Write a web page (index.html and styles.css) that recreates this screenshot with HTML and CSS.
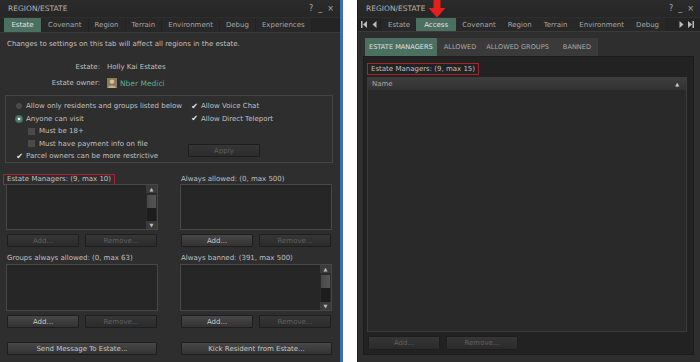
FILE: index.html
```html
<!DOCTYPE html>
<html lang="en">
<head>
    <meta charset="UTF-8">
    <title>Region/Estate</title>
    <link rel="stylesheet" href="styles.css">
</head>
<body>
<div class="screen">

    <!-- left floater: Estate tab -->
    <div class="window win-left">
        <div class="titlebar">
            <span class="title">REGION/ESTATE</span>
            <span class="controls"><span>?</span><span>_</span><span>×</span></span>
        </div>
        <div class="tabs tabs-left">
            <span class="tab active tab-wide">Estate</span>
            <span class="tab">Covenant</span>
            <span class="tab">Region</span>
            <span class="tab">Terrain</span>
            <span class="tab">Environment</span>
            <span class="tab">Debug</span>
            <span class="tab">Experiences</span>
        </div>

        <div class="estate-body">
            <p class="note">Changes to settings on this tab will affect all regions in the estate.</p>

            <div class="info-row">
                <span class="info-label">Estate:</span>
                <span>Holly Kai Estates</span>
            </div>
            <div class="info-row">
                <span class="info-label">Estate owner:</span>
                <svg class="avatar" width="10" height="10" viewBox="0 0 10 10">
                    <rect width="10" height="10" fill="#8c7a58"/>
                    <circle cx="5" cy="3.6" r="2.2" fill="#d9c39a"/>
                    <path d="M1 10 C1.5 6.5 8.5 6.5 9 10 Z" fill="#c9b083"/>
                </svg>
                <span class="owner">Nber Medici</span>
            </div>

            <div class="options">
                <div class="opt-col opt-main">
                    <div class="opt"><span class="radio"></span>Allow only residents and groups listed below</div>
                    <div class="opt"><span class="radio on"></span>Anyone can visit</div>
                    <div class="opt sub"><span class="check"></span>Must be 18+</div>
                    <div class="opt sub"><span class="check"></span>Must have payment info on file</div>
                    <div class="opt"><span class="check on">✔</span>Parcel owners can be more restrictive</div>
                </div>
                <div class="opt-col">
                    <div class="opt"><span class="check on">✔</span>Allow Voice Chat</div>
                    <div class="opt"><span class="check on">✔</span>Allow Direct Teleport</div>
                    <button class="btn off apply">Apply</button>
                </div>
            </div>

            <div class="lists">
                <div class="list-col">
                    <div class="list-label"><span class="marked">Estate Managers: (9, max 10)</span></div>
                    <div class="listbox">
                        <div class="scrollbar">
                            <span class="sb-arrow">▲</span>
                            <span class="sb-thumb"></span>
                            <span class="sb-track"></span>
                            <span class="sb-arrow">▼</span>
                        </div>
                    </div>
                    <div class="btn-row">
                        <button class="btn off">Add...</button>
                        <button class="btn off">Remove...</button>
                    </div>
                </div>
                <div class="list-col">
                    <div class="list-label">Always allowed: (0, max 500)</div>
                    <div class="listbox"></div>
                    <div class="btn-row">
                        <button class="btn">Add...</button>
                        <button class="btn off">Remove...</button>
                    </div>
                </div>
                <div class="list-col">
                    <div class="list-label">Groups always allowed: (0, max 63)</div>
                    <div class="listbox tall"></div>
                    <div class="btn-row">
                        <button class="btn">Add...</button>
                        <button class="btn off">Remove...</button>
                    </div>
                    <button class="btn wide">Send Message To Estate...</button>
                </div>
                <div class="list-col">
                    <div class="list-label">Always banned: (391, max 500)</div>
                    <div class="listbox tall">
                        <div class="scrollbar">
                            <span class="sb-arrow">▲</span>
                            <span class="sb-thumb"></span>
                            <span class="sb-track"></span>
                            <span class="sb-arrow">▼</span>
                        </div>
                    </div>
                    <div class="btn-row">
                        <button class="btn">Add...</button>
                        <button class="btn off">Remove...</button>
                    </div>
                    <button class="btn wide">Kick Resident from Estate...</button>
                </div>
            </div>
        </div>
    </div>

    <!-- right floater: Access tab -->
    <div class="window win-right">
        <div class="titlebar">
            <span class="title">REGION/ESTATE</span>
            <svg class="red-arrow" width="18" height="18" viewBox="0 0 18 18">
                <path d="M5.5 0 H12.5 V8 H17.5 L9 17.5 L0.5 8 H5.5 Z" fill="#e3201b"/>
            </svg>
            <span class="controls"><span>?</span><span>_</span><span>×</span></span>
        </div>
        <div class="tabs tabs-right">
            <span class="tab-scroll">
                <svg width="6" height="7" viewBox="0 0 6 7"><rect width="1.5" height="7" fill="#bbb"/><path d="M6 0 V7 L2 3.5 Z" fill="#bbb"/></svg>
                <svg width="5" height="7" viewBox="0 0 5 7"><path d="M4.5 0 V7 L0.5 3.5 Z" fill="#bbb"/></svg>
            </span>
            <span class="tab">Estate</span>
            <span class="tab active">Access</span>
            <span class="tab">Covenant</span>
            <span class="tab">Region</span>
            <span class="tab">Terrain</span>
            <span class="tab">Environment</span>
            <span class="tab">Debug</span>
            <span class="tab-scroll right">
                <svg width="5" height="7" viewBox="0 0 5 7"><path d="M0.5 0 V7 L4.5 3.5 Z" fill="#bbb"/></svg>
                <svg width="6" height="7" viewBox="0 0 6 7"><path d="M0 0 V7 L4 3.5 Z" fill="#bbb"/><rect x="4.5" width="1.5" height="7" fill="#bbb"/></svg>
            </span>
        </div>

        <div class="access-body">
            <div class="subtabs">
                <span class="subtab active">ESTATE MANAGERS</span>
                <span class="subtab">ALLOWED</span>
                <span class="subtab">ALLOWED GROUPS</span>
                <span class="subtab">BANNED</span>
            </div>
            <div class="access-panel">
                <div class="list-label"><span class="marked">Estate Managers: (9, max 15)</span></div>
                <div class="name-list">
                    <div class="name-head">
                        <span>Name</span>
                        <span class="sort">▲</span>
                    </div>
                </div>
                <div class="btn-row">
                    <button class="btn off">Add...</button>
                    <button class="btn off">Remove...</button>
                </div>
            </div>
        </div>
    </div>

</div>
</body>
</html>
```

FILE: styles.css
```css
* {
    box-sizing: border-box;
}

body {
    margin: 0;
    background: #ffffff;
    font-family: "DejaVu Sans", sans-serif;
    font-size: 7px;
    color: #c0c0c0;
}

.screen {
    display: flex;
    width: 700px;
    height: 362px;
    overflow: hidden;
}

.window {
    display: flex;
    flex-direction: column;
    height: 362px;
    background: #2e2e2e;
}

.win-left {
    width: 343px;
    border-right: 3px solid #3c6db5;
}

.win-right {
    width: 343px;
    margin-left: 14px;
    border-left: 1px solid #1a1a1a;
}

/* title bar */

.titlebar {
    position: relative;
    display: flex;
    align-items: center;
    justify-content: space-between;
    height: 17px;
    padding: 0 6px 0 8px;
    background: linear-gradient(#2b2b2b, #262626);
}

.title {
    font-size: 7.5px;
    color: #b4b4b4;
}

.controls {
    display: flex;
    gap: 5px;
    font-size: 8px;
    color: #a8a8a8;
}

.red-arrow {
    position: absolute;
    left: 70px;
    top: 0;
}

/* main tabs */

.tabs {
    display: flex;
    height: 14px;
    margin-top: 1px;
    border-bottom: 1px solid #3a3a3a;
    background: #242424;
}

.tabs-left {
    padding-left: 4px;
    height: 15px;
}

.tab {
    padding: 0 6px;
    line-height: 14px;
    color: #a6a6a6;
    background: #282828;
    border-right: 1px solid #222;
}

.tab-wide {
    min-width: 38px;
    text-align: center;
}

.tab.active {
    background: #4b6f60;
    color: #e2e2e2;
}

.tabs-right .tab {
    padding: 0 6px;
    border-right: none;
}

.tabs-right .tab.active {
    padding: 0 8px;
}

.tab-scroll {
    display: flex;
    align-items: center;
    gap: 5px;
    padding: 0 5px 0 3px;
}

.tab-scroll.right {
    margin-left: auto;
    gap: 4px;
    padding: 0 6px 0 0;
}

/* estate tab body */

.estate-body {
    display: flex;
    flex-direction: column;
    padding: 0 7px 0 5px;
}

.note {
    margin: 6px 0 0 2px;
    line-height: 10px;
}

.info-row {
    display: flex;
    align-items: center;
    height: 16px;
}

.note + .info-row {
    margin-top: 10px;
}

.info-label {
    width: 95px;
    margin-right: 7px;
    text-align: right;
}

.avatar {
    margin-right: 3px;
}

.owner {
    color: #5fae8e;
    font-size: 7.5px;
}

.options {
    display: flex;
    height: 68px;
    margin-top: 4px;
    padding: 4px 0 0 10px;
    border: 1px solid #454545;
}

.opt-main {
    width: 175px;
}

.opt {
    display: flex;
    align-items: center;
    height: 12.5px;
    white-space: nowrap;
}

.opt.sub {
    padding-left: 12px;
}

.radio {
    width: 6px;
    height: 6px;
    margin-right: 4px;
    border-radius: 50%;
    background: #4a4a4a;
}

.radio.on {
    width: 8px;
    height: 8px;
    margin: 0 3px 0 -1px;
    background: radial-gradient(circle, #ffffff 0 1.2px, #5b8a76 1.6px, #3e6456 4px);
}

.check {
    display: inline-flex;
    align-items: center;
    justify-content: center;
    width: 7px;
    height: 7px;
    margin-right: 4px;
    background: #4a4a4a;
    font-size: 8px;
    color: #e8e8e8;
}

.check.on {
    background: none;
    margin-right: 3px;
}

.apply {
    width: 60px;
    margin: 19px 0 0 -3px;
}

/* lists */

.lists {
    display: grid;
    grid-template-columns: 152px 152px;
    column-gap: 22px;
    margin-left: 1px;
    margin-top: 11px;
}

.list-col {
    display: flex;
    flex-direction: column;
}

.list-label {
    height: 10px;
    line-height: 10px;
    padding-left: 1px;
    white-space: nowrap;
}

.list-col:nth-child(n+3) .list-label {
    margin-top: 6px;
}

.marked {
    display: inline-block;
    margin-left: -4px;
    padding: 0 3px;
    line-height: 9px;
    border: 1px solid #a8232f;
}

.listbox {
    display: flex;
    justify-content: flex-end;
    height: 46px;
    background: #262626;
    border: 1px solid #474747;
}

.listbox.tall {
    height: 47px;
    margin-top: 1px;
}

.scrollbar {
    display: flex;
    flex-direction: column;
    width: 11px;
    background: #2a2a2a;
}

.sb-arrow {
    height: 8px;
    font-size: 5px;
    line-height: 8px;
    text-align: center;
    color: #bdbdbd;
    background: #3a3a3a;
}

.sb-thumb {
    height: 13px;
    margin: 2px 1px 0;
    background: linear-gradient(90deg, #484848, #565656);
}

.sb-track {
    flex: 1;
    background: #1d1d1d;
    margin: 0 1px;
}

.btn-row {
    display: flex;
    gap: 6px;
    margin-top: 4px;
    padding-left: 1px;
}

.btn {
    width: 72px;
    height: 13px;
    padding: 0;
    font-family: inherit;
    font-size: 7px;
    color: #c8c8c8;
    background: linear-gradient(#474747, #333333);
    border: 1px solid #1e1e1e;
    border-radius: 1px;
}

.btn.off {
    color: #606060;
    background: linear-gradient(#363636, #2b2b2b);
}

.btn.wide {
    width: 150px;
    margin: 14px 0 0 1px;
}

.list-col:nth-child(4) .btn.wide {
    width: 151px;
}

/* access tab body */

.access-body {
    display: flex;
    flex-direction: column;
    flex: 1;
    padding: 6px 6px 7px 5px;
}

.subtabs {
    display: flex;
    align-self: flex-start;
    height: 18px;
    margin-left: 2px;
    background: #3a3a3a;
}

.subtab {
    padding: 0 5px 0 7px;
    font-size: 6.6px;
    line-height: 18px;
    color: #a8a8a8;
}

.subtab.active {
    padding: 0 4px;
    background: #4b6f60;
    color: #e2e2e2;
}

.subtab:nth-child(3) {
    padding: 0 5px;
}

.subtab:last-child {
    padding: 0 7px 0 9px;
}

.access-panel {
    display: flex;
    flex-direction: column;
    flex: 1;
    padding: 6px 6px 0 3px;
    background: #222222;
    border: 1px solid #1c1c1c;
}

.access-panel .list-label {
    height: 11px;
    line-height: 11px;
    padding-left: 5px;
}

.access-panel .marked {
    line-height: 10px;
    margin-left: -5px;
}

.name-list {
    height: 255px;
    margin-top: 3px;
    background: #292929;
    border: 1px solid #3c3c3c;
}

.name-head {
    display: flex;
    justify-content: space-between;
    align-items: center;
    height: 12px;
    padding: 0 7px 0 4px;
    background: linear-gradient(#3d3d3d, #323232);
    color: #a8a8a8;
}

.sort {
    font-size: 5px;
    color: #d0d0d0;
}

.access-panel .btn-row {
    padding-left: 1px;
}

.access-panel .btn {
    height: 14px;
    width: 72px;
}
```
